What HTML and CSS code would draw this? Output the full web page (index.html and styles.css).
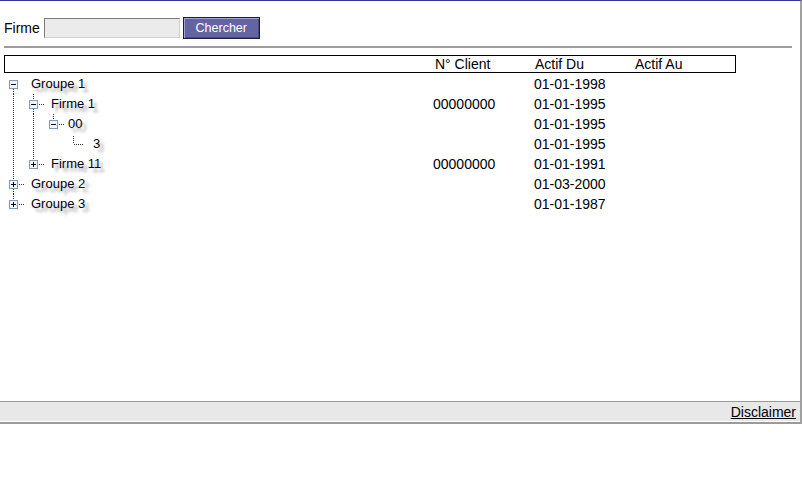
FILE: index.html
```html
<!DOCTYPE html>
<html>
<head>
<meta charset="utf-8">
<link rel="stylesheet" href="styles.css">
</head>
<body>
<div class="page">
  <div class="main">
    <form class="search">
      <label class="search-label">Firme</label>
      <input class="search-input" type="text">
      <button class="search-btn" type="button">Chercher</button>
    </form>
    <div class="rule"></div>
    <div class="head">
      <span class="h-tree"></span>
      <span class="h-col">N° Client</span>
      <span class="h-col">Actif Du</span>
      <span class="h-col">Actif Au</span>
    </div>
    <div class="rows">
      <div class="row">
        <div class="tree">
          <svg class="ic" width="20" height="20" viewBox="0 0 20 20"><line x1="9.5" y1="15" x2="9.5" y2="20" class="dot"/><rect x="5.5" y="6.5" width="8" height="8" class="box"/><line x1="7" y1="10.5" x2="12" y2="10.5" class="sign"/></svg>
          <span class="label">Groupe 1</span>
        </div>
        <span class="cell"></span><span class="cell">01-01-1998</span><span class="cell"></span>
      </div>
      <div class="row">
        <div class="tree">
          <span class="g v"></span>
          <svg class="ic" width="20" height="20" viewBox="0 0 20 20"><line x1="9.5" y1="0" x2="9.5" y2="6" class="dot"/><line x1="9.5" y1="15" x2="9.5" y2="20" class="dot"/><line x1="15" y1="10.5" x2="20" y2="10.5" class="dot"/><rect x="5.5" y="6.5" width="8" height="8" class="box"/><line x1="7" y1="10.5" x2="12" y2="10.5" class="sign"/></svg>
          <span class="label">Firme 1</span>
        </div>
        <span class="cell">00000000</span><span class="cell">01-01-1995</span><span class="cell"></span>
      </div>
      <div class="row">
        <div class="tree">
          <span class="g v"></span><span class="g v"></span>
          <svg class="ic" width="20" height="20" viewBox="0 0 20 20"><line x1="9.5" y1="0" x2="9.5" y2="6" class="dot"/><line x1="15" y1="10.5" x2="20" y2="10.5" class="dot"/><rect x="5.5" y="6.5" width="8" height="8" class="box"/><line x1="7" y1="10.5" x2="12" y2="10.5" class="sign"/></svg>
          <span class="label label-tight">00</span>
        </div>
        <span class="cell"></span><span class="cell">01-01-1995</span><span class="cell"></span>
      </div>
      <div class="row">
        <div class="tree">
          <span class="g v"></span><span class="g v"></span><span class="g"></span>
          <svg class="ic" width="20" height="20" viewBox="0 0 20 20"><line x1="9.5" y1="2" x2="9.5" y2="10" class="dot"/><line x1="10" y1="10.5" x2="20" y2="10.5" class="dot"/></svg>
          <span class="label label-wide">3</span>
        </div>
        <span class="cell"></span><span class="cell">01-01-1995</span><span class="cell"></span>
      </div>
      <div class="row">
        <div class="tree">
          <span class="g v"></span>
          <svg class="ic" width="20" height="20" viewBox="0 0 20 20"><line x1="9.5" y1="0" x2="9.5" y2="6" class="dot"/><line x1="15" y1="10.5" x2="20" y2="10.5" class="dot"/><rect x="5.5" y="6.5" width="8" height="8" class="box"/><line x1="7" y1="10.5" x2="12" y2="10.5" class="sign"/><line x1="9.5" y1="8" x2="9.5" y2="13" class="sign"/></svg>
          <span class="label">Firme 11</span>
        </div>
        <span class="cell">00000000</span><span class="cell">01-01-1991</span><span class="cell"></span>
      </div>
      <div class="row">
        <div class="tree">
          <svg class="ic" width="20" height="20" viewBox="0 0 20 20"><line x1="9.5" y1="0" x2="9.5" y2="6" class="dot"/><line x1="9.5" y1="15" x2="9.5" y2="20" class="dot"/><line x1="15" y1="10.5" x2="20" y2="10.5" class="dot"/><rect x="5.5" y="6.5" width="8" height="8" class="box"/><line x1="7" y1="10.5" x2="12" y2="10.5" class="sign"/><line x1="9.5" y1="8" x2="9.5" y2="13" class="sign"/></svg>
          <span class="label">Groupe 2</span>
        </div>
        <span class="cell"></span><span class="cell">01-03-2000</span><span class="cell"></span>
      </div>
      <div class="row">
        <div class="tree">
          <svg class="ic" width="20" height="20" viewBox="0 0 20 20"><line x1="9.5" y1="0" x2="9.5" y2="6" class="dot"/><line x1="15" y1="10.5" x2="20" y2="10.5" class="dot"/><rect x="5.5" y="6.5" width="8" height="8" class="box"/><line x1="7" y1="10.5" x2="12" y2="10.5" class="sign"/><line x1="9.5" y1="8" x2="9.5" y2="13" class="sign"/></svg>
          <span class="label">Groupe 3</span>
        </div>
        <span class="cell"></span><span class="cell">01-01-1987</span><span class="cell"></span>
      </div>
    </div>
  </div>
  <div class="footer">
    <a class="disclaimer" href="#">Disclaimer</a>
  </div>
</div>
</body>
</html>
```

FILE: styles.css
```css
html, body {
  margin: 0;
  padding: 0;
  background: #fff;
}
body {
  font-family: "Liberation Sans", Arial, sans-serif;
  font-size: 14px;
  color: #000;
}
.page {
  width: 800px;
  height: 423px;
  border-top: 1px solid #33339a;
  border-right: 2px solid #a0a0a0;
  display: flex;
  flex-direction: column;
}
.main {
  flex: 1;
  padding: 0 0 0 4px;
}
.search {
  margin: 0;
  padding-top: 16px;
  display: flex;
  align-items: center;
  height: 22px;
}
.search-label {
  font-size: 14px;
  line-height: 16px;
  margin-right: 4px;
}
.search-input {
  box-sizing: border-box;
  width: 136px;
  height: 20px;
  margin: 0;
  padding: 0 2px;
  background: #ebebeb;
  border-style: solid;
  border-width: 1px;
  border-color: #7c7c7c #d0d0d0 #d0d0d0 #7c7c7c;
}
.search-btn {
  box-sizing: border-box;
  width: 77px;
  height: 22px;
  margin: 0 0 0 3px;
  padding: 0;
  background: #6464a2;
  color: #fff;
  font-family: "Liberation Sans", Arial, sans-serif;
  font-size: 12.5px;
  border: 1px solid #1c1c48;
  box-shadow: inset 1px 1px 0 #a4a4d4, inset -1px -1px 0 #4a4a80;
}
.rule {
  width: 788px;
  margin-top: 7px;
  border-top: 2px solid #9c9c9c;
}
.head {
  box-sizing: border-box;
  width: 732px;
  height: 18px;
  margin-top: 7px;
  border: 1px solid #000;
  display: grid;
  grid-template-columns: 430px 100px 100px 100px;
  line-height: 16px;
}
.rows {
  margin-top: 1px;
}
.row {
  display: grid;
  grid-template-columns: 429px 101px 100px 100px;
  height: 20px;
  line-height: 20px;
}
.tree {
  display: flex;
  align-items: center;
  height: 20px;
}
.g {
  flex: none;
  width: 20px;
  height: 20px;
}
.g.v {
  background: repeating-linear-gradient(to bottom, #333 0 1px, transparent 1px 2px) 9px 0 / 1px 100% no-repeat;
}
.ic {
  flex: none;
  display: block;
}
.ic .dot {
  stroke: #333;
  stroke-width: 1;
  stroke-dasharray: 1 1;
}
.ic .box {
  fill: #f3f5fa;
  stroke: #7f9db9;
  stroke-width: 1;
}
.ic .sign {
  stroke: #000;
  stroke-width: 1;
}
.label {
  font-size: 13px;
  color: #000018;
  margin-left: 7px;
  white-space: nowrap;
  text-shadow: 4px 4px 3px rgba(0, 0, 0, 0.35);
}
.label-tight {
  margin-left: 4px;
}
.label-wide {
  margin-left: 9px;
}
.cell {
  white-space: nowrap;
}
.footer {
  box-sizing: border-box;
  height: 23px;
  border-top: 1px solid #9a9a9a;
  border-bottom: 2px solid #9a9a9a;
  background: #e8e8e8;
  box-shadow: inset 0 -1px 0 #fff;
  display: flex;
  justify-content: flex-end;
  align-items: center;
  padding-right: 4px;
}
.disclaimer {
  color: #000;
  text-decoration: underline;
  font-size: 14px;
  line-height: 16px;
}
```
